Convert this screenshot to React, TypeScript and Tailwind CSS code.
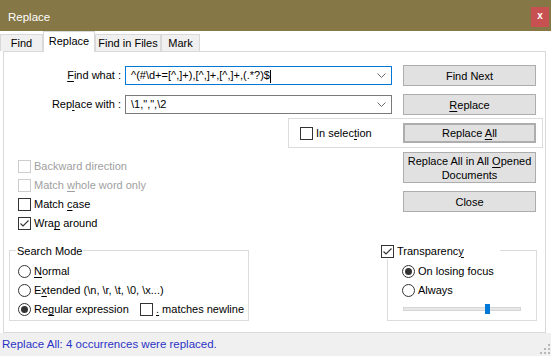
import React from "react";

const Box = ({ checked, disabled }: { checked?: boolean; disabled?: boolean }) => (
  <svg width="13" height="13" viewBox="0 0 13 13" className="shrink-0">
    <rect x="0.5" y="0.5" width="12" height="12" fill="#fff" stroke={disabled ? "#cccccc" : "#333333"} />
    {checked && <path d="M2.5 6.5 L5 9 L10.5 3.5" fill="none" stroke="#333333" strokeWidth="1.1" />}
  </svg>
);

const Radio = ({ on }: { on?: boolean }) => (
  <svg width="13" height="13" viewBox="0 0 13 13" className="shrink-0">
    <circle cx="6.5" cy="6.5" r="6" fill="#fff" stroke="#333333" />
    {on && <circle cx="6.5" cy="6.5" r="3.5" fill="#333333" />}
  </svg>
);

const Chevron = () => (
  <svg width="9" height="5" viewBox="0 0 9 5" className="mr-[5px]">
    <path d="M0.5 0.5 L4.5 4.5 L8.5 0.5" fill="none" stroke="#6b6b6b" />
  </svg>
);

const Btn = ({ children, className = "" }: { children: React.ReactNode; className?: string }) => (
  <div
    className={`w-[133px] flex items-center justify-center text-center bg-[#e1e1e1] border border-[#adadad] leading-[14px] ${className}`}
  >
    {children}
  </div>
);

const U = ({ children }: { children: React.ReactNode }) => <span className="underline underline-offset-2">{children}</span>;

const tabs = ["Find", "Replace", "Find in Files", "Mark"];
const tabWidths = ["w-[43px]", "w-[52px]", "w-[66px]", "w-[39px]"];

export default function App() {
  return (
    <div className="w-[551px] h-[356px] bg-white flex flex-col overflow-hidden text-[11px] text-black font-['Liberation_Sans',Arial,sans-serif]">
      {/* Title bar */}
      <div className="h-[31px] shrink-0 bg-[#867746] flex items-start justify-between">
        <span className="text-white text-[11.5px] pl-[8px] mt-[9px]">Replace</span>
        <div className="w-[18px] h-[20px] mt-[7px] mr-[2px] bg-[#c75050] flex items-center justify-center text-white font-bold text-[10px] leading-none pb-[2px]">
          x
        </div>
      </div>

      {/* Tabs */}
      <div className="h-[20px] shrink-0 flex items-end">
        {tabs.map((t, i) =>
          i === 1 ? (
            <div
              key={t}
              className={`${tabWidths[i]} h-[21px] -mb-px relative bg-white border border-b-0 border-[#d9d9d9] flex items-center justify-center pb-[2px]`}
            >
              {t}
            </div>
          ) : (
            <div
              key={t}
              className={`${tabWidths[i]} h-[17px] bg-[#f0f0f0] border border-b-0 border-[#d9d9d9] flex items-center justify-center`}
            >
              {t}
            </div>
          )
        )}
      </div>

      {/* Panel */}
      <div className="ml-[3px] w-[543px] h-[282px] shrink-0 border border-[#d9d9d9] bg-white flex flex-col">
        <div className="mt-[13px] h-[21px] flex items-center">
          <div className="w-[117px] text-right">
            <U>F</U>ind what :
          </div>
          <div className="ml-[4px] w-[267px] h-[19px] border border-[#0078d7] flex items-center justify-between pl-[5px]">
            <span>
              ^(#\d+=[^,]+),[^,]+,[^,]+,(.*?)$<span className="inline-block w-px h-[13px] bg-black align-middle" />
            </span>
            <Chevron />
          </div>
          <Btn className="ml-[11px] h-[21px]">Find Next</Btn>
        </div>

        <div className="mt-[8px] h-[21px] flex items-center">
          <div className="w-[117px] text-right">
            Rep<U>l</U>ace with :
          </div>
          <div className="ml-[4px] w-[267px] h-[19px] border border-[#7a7a7a] flex items-center justify-between pl-[5px]">
            <span>\1,",",\2</span>
            <Chevron />
          </div>
          <Btn className="ml-[11px] h-[21px]">
            <span>
              <U>R</U>eplace
            </span>
          </Btn>
        </div>

        {/* Middle */}
        <div className="mt-[3px] flex items-start">
          <div className="w-[284px] pl-[14px] pt-[39px] flex flex-col">
            <div className="h-[19px] flex items-center gap-[3px] text-[#a0a0a0]">
              <Box disabled />
              Backward direction
            </div>
            <div className="h-[19px] flex items-center gap-[3px] text-[#a0a0a0]">
              <Box disabled />
              <span>
                Match <U>w</U>hole word only
              </span>
            </div>
            <div className="h-[19px] flex items-center gap-[3px]">
              <Box />
              <span>
                Match <U>c</U>ase
              </span>
            </div>
            <div className="h-[19px] flex items-center gap-[3px]">
              <Box checked />
              <span>
                Wra<U>p</U> around
              </span>
            </div>
          </div>

          <div className="flex flex-col">
            <div className="w-[255px] h-[30px] border border-[#dcdcdc] flex items-center">
              <div className="w-[114px] pl-[11px] flex items-center gap-[3px]">
                <Box />
                <span>
                  In selec<U>t</U>ion
                </span>
              </div>
              <Btn className="h-[20px] border-2 border-[#0078d7]">
                <span>
                  Replace <U>A</U>ll
                </span>
              </Btn>
            </div>
            <Btn className="ml-[115px] mt-[4px] h-[31px]">
              <span>
                Replace All in All <U>O</U>pened
                <br />
                Documents
              </span>
            </Btn>
            <Btn className="ml-[115px] mt-[8px] h-[21px]">Close</Btn>
          </div>
        </div>

        {/* Bottom groups */}
        <div className="mt-[17px] flex items-start">
          <div className="relative ml-[5px] w-[240px] h-[71px] border border-[#dcdcdc] pl-[8px] pt-[11px] flex flex-col">
            <div className="absolute left-[6px] -top-[8px] h-[16px] px-[1px] bg-white leading-[16px]">Search Mode</div>
            <div className="h-[19px] flex items-center gap-[3px]">
              <Radio />
              <span>
                <U>N</U>ormal
              </span>
            </div>
            <div className="h-[19px] flex items-center gap-[3px]">
              <Radio />
              <span>
                E<U>x</U>tended (\n, \r, \t, \0, \x...)
              </span>
            </div>
            <div className="h-[19px] flex items-center">
              <div className="w-[122px] flex items-center gap-[3px]">
                <Radio on />
                <span>
                  Re<U>g</U>ular expression
                </span>
              </div>
              <div className="flex items-center gap-[3px]">
                <Box />
                <span>
                  <U>.</U> matches newline
                </span>
              </div>
            </div>
          </div>

          <div className="relative ml-[138px] w-[150px] h-[71px] border border-[#dcdcdc] pl-[14px] pt-[11px] flex flex-col">
            <div className="absolute -left-[7px] -top-[8px] w-[119px] h-[16px] bg-white flex items-center gap-[3px]">
              <Box checked />
              <span>
                Transparenc<U>y</U>
              </span>
            </div>
            <div className="h-[19px] flex items-center gap-[3px]">
              <Radio on />
              On losing focus
            </div>
            <div className="h-[19px] flex items-center gap-[3px]">
              <Radio />
              Always
            </div>
            <div className="relative mt-[7px] ml-px w-[118px] h-[4px] bg-[#e7e7e7] border border-[#d6d6d6]">
              <div className="absolute left-[81px] -top-[4px] w-[5px] h-[10px] bg-[#0078d7]" />
            </div>
          </div>
        </div>
      </div>

      {/* Status bar */}
      <div className="flex-1 bg-[#f0f0f0] flex items-center justify-between pl-[2px] pr-[1px] text-[#2b33c6]">
        <span className="text-[11.5px]">Replace All: 4 occurrences were replaced.</span>
        <svg width="10" height="10" viewBox="0 0 10 10" className="self-end mb-[2px]">
          {[
            [8, 0],
            [8, 4],
            [4, 4],
            [8, 8],
            [4, 8],
            [0, 8],
          ].map(([x, y]) => (
            <rect key={`${x}-${y}`} x={x} y={y} width="2" height="2" fill="#b8b8b8" />
          ))}
        </svg>
      </div>
    </div>
  );
}
